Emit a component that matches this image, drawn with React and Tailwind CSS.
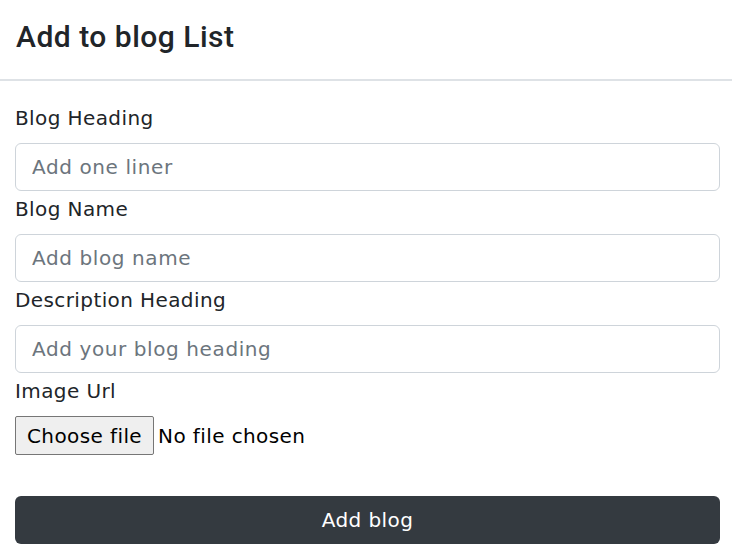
import React from 'react';

const fields = [
  { label: 'Blog Heading', placeholder: 'Add one liner' },
  { label: 'Blog Name', placeholder: 'Add blog name' },
  { label: 'Description Heading', placeholder: 'Add your blog heading' },
];

const AddBlog = () => {
  return (
    <div className="w-[732px] h-[557px] bg-white text-[#212529] font-['DejaVu_Sans',sans-serif] tracking-[0.4px] overflow-hidden">
      <div className="h-[81px] px-4 flex items-center border-b-2 border-[#dee2e6]">
        <h5 className="text-[30px] leading-none font-medium font-['Roboto',sans-serif] tracking-[0.5px] -mt-[6px]">
          Add to blog List
        </h5>
      </div>
      <form className="px-[15px] pt-[19px] pr-[12px]">
        {fields.map((f) => (
          <div key={f.label}>
            <label className="block text-[20px] leading-[30px] mb-[10px] pt-[3px]">{f.label}</label>
            <input
              type="text"
              placeholder={f.placeholder}
              className="block w-full h-[48px] px-4 text-[20px] tracking-[0.6px] border border-[#ced4da] rounded-[6px] placeholder:text-[#6c757d] outline-none"
            />
          </div>
        ))}
        <label className="block text-[20px] leading-[30px] mb-[10px] pt-[3px]">Image Url</label>
        <div className="flex items-center gap-[4px] text-[20px]">
          <span className="h-[39px] px-[11px] flex items-center bg-[#efefef] border border-[#767676] rounded-[2px] text-black">
            Choose file
          </span>
          <span className="text-black">No file chosen</span>
        </div>
        <button
          type="button"
          className="mt-[41px] w-full h-[48px] bg-[#343a40] text-white text-[20px] tracking-[0.4px] rounded-[6px]"
        >
          Add blog
        </button>
      </form>
    </div>
  );
};

export default function App() {
  return <AddBlog />;
}
